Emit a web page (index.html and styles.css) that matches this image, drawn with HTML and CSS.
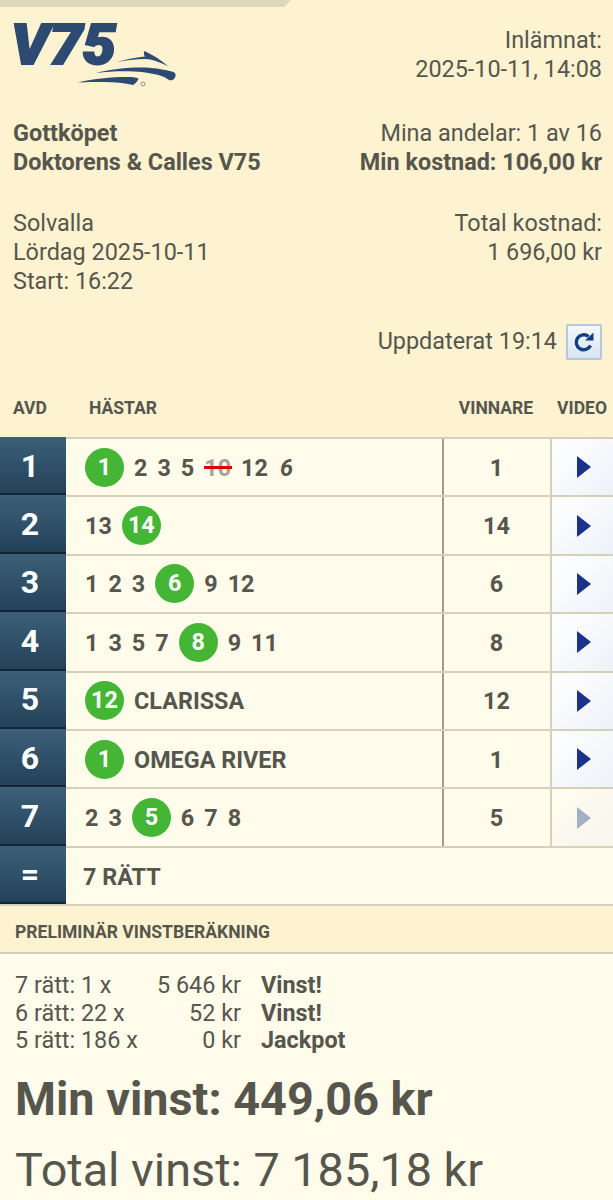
FILE: index.html
```html
<!DOCTYPE html>
<html lang="sv">
<head>
<meta charset="utf-8">
<title>V75</title>
<link rel="stylesheet" href="styles.css">
</head>
<body>
<div class="topbar"></div>
<header class="head">
  <div class="head-row logo-row">
    <svg class="logo" width="180" height="70" viewBox="0 24 180 70">
      <text class="logo-text" x="11" y="64" textLength="105" lengthAdjust="spacingAndGlyphs">V75</text>
      <path class="logo-shape" d="M115 62.500 C125 59.500 135 57.500 145 56.500 C143.500 54.500 143.500 53 144.500 51 C153 55 161 60 168.500 66.500 C161 62.500 153 59.500 146 59 C135 59 125 60.500 115 62.500 Z"/>
      <path class="logo-shape" d="M96 73 C110 69 130 67 146 67.500 C156 68 166 70 172 71.500 C175 72 176 74 175.500 76.500 C174 80 171 81 169 80 C166 78 163 76 160 75.500 C145 71 120 70 96 73 Z"/>
      <path class="logo-shape" d="M78 82.500 C90 79 112 77 128 77 C133 77 138 77.500 138.500 79 C137 82 135 84 133 85 C125 83 115 82 104 82 C95 82 86 82 78 82.500 Z"/>
      <circle class="logo-mark" cx="143" cy="84" r="2"/>
    </svg>
    <div class="right">Inlämnat:<br>2025-10-11, 14:08</div>
  </div>
  <div class="head-row share-row">
    <div class="strong">Gottköpet<br>Doktorens &amp; Calles V75</div>
    <div class="right">Mina andelar: 1 av 16<br><span class="strong">Min kostnad: 106,00 kr</span></div>
  </div>
  <div class="head-row track-row">
    <div>Solvalla<br>Lördag 2025-10-11<br>Start: 16:22</div>
    <div class="right">Total kostnad:<br>1 696,00 kr</div>
  </div>
  <div class="updated">
    <span>Uppdaterat 19:14</span>
    <button class="refresh" type="button" aria-label="Uppdatera">
      <svg width="24" height="24" viewBox="0 0 24 24"><path class="refresh-arc" d="M18.500 15.500 A7.500 7.500 0 1 1 16.500 6.500"/><path class="refresh-tip" d="M13 10.500 L21.500 10.500 L21.500 2.500 Z"/></svg>
    </button>
  </div>
</header>
<div class="cols">
  <div class="col-avd">AVD</div>
  <div class="col-horses">HÄSTAR</div>
  <div class="col-win">VINNARE</div>
  <div class="col-video">VIDEO</div>
</div>
<section class="table">
  <div class="row">
    <div class="avd">1</div>
    <div class="horses"><b class="hit">1</b><span>2</span><span>3</span><span>5</span><span class="out">10</span><span>12</span><i>6</i></div>
    <div class="winner">1</div>
    <div class="video"><span class="play"></span></div>
  </div>
  <div class="row">
    <div class="avd">2</div>
    <div class="horses"><span>13</span><b class="hit">14</b></div>
    <div class="winner">14</div>
    <div class="video"><span class="play"></span></div>
  </div>
  <div class="row">
    <div class="avd">3</div>
    <div class="horses"><span>1</span><span>2</span><span>3</span><b class="hit">6</b><span>9</span><span>12</span></div>
    <div class="winner">6</div>
    <div class="video"><span class="play"></span></div>
  </div>
  <div class="row">
    <div class="avd">4</div>
    <div class="horses"><span>1</span><span>3</span><span>5</span><span>7</span><b class="hit">8</b><span>9</span><span>11</span></div>
    <div class="winner">8</div>
    <div class="video"><span class="play"></span></div>
  </div>
  <div class="row">
    <div class="avd">5</div>
    <div class="horses"><b class="hit">12</b><span>CLARISSA</span></div>
    <div class="winner">12</div>
    <div class="video"><span class="play"></span></div>
  </div>
  <div class="row">
    <div class="avd">6</div>
    <div class="horses"><b class="hit">1</b><span>OMEGA RIVER</span></div>
    <div class="winner">1</div>
    <div class="video"><span class="play"></span></div>
  </div>
  <div class="row">
    <div class="avd">7</div>
    <div class="horses"><span>2</span><span>3</span><b class="hit">5</b><span>6</span><span>7</span><span>8</span></div>
    <div class="winner">5</div>
    <div class="video video-off"><span class="play"></span></div>
  </div>
  <div class="row row-total">
    <div class="avd">=</div>
    <div class="total-label">7 RÄTT</div>
  </div>
</section>
<div class="prelim">PRELIMINÄR VINSTBERÄKNING</div>
<section class="wins">
  <div class="win-grid">
    <span>7 rätt: 1 x</span><span class="amt">5 646 kr</span><span class="strong res">Vinst!</span>
    <span>6 rätt: 22 x</span><span class="amt">52 kr</span><span class="strong res">Vinst!</span>
    <span>5 rätt: 186 x</span><span class="amt">0 kr</span><span class="strong res">Jackpot</span>
  </div>
  <div class="my-win">Min vinst: 449,06 kr</div>
  <div class="all-win">Total vinst: 7 185,18 kr</div>
</section>
</body>
</html>
```
FILE: styles.css
```css
* { box-sizing: border-box; }
html, body { margin: 0; }
body {
  width: 613px;
  height: 1200px;
  overflow: hidden;
  background: #fdf3d0;
  color: #57564d;
  font-family: Roboto, "Liberation Sans", sans-serif;
  font-size: 23.400px;
  line-height: 29.200px;
}
.topbar {
  width: 291px;
  height: 7px;
  background: #dcd8bd;
  clip-path: polygon(0 0, 100% 0, 97.700% 100%, 0 100%);
}
.head { padding: 0 11px 0 13px; }
.head-row { display: flex; justify-content: space-between; align-items: flex-start; }
.right { text-align: right; }
.strong { font-weight: 700; }
.logo-row { height: 112px; padding-top: 19px; margin-left: -13px; }
.logo { display: block; margin-top: -2px; overflow: visible; }
.logo-text { font: italic 900 56px Roboto, sans-serif; fill: #2d4a72; stroke: #2d4a72; stroke-width: 2px; }
.logo-shape { fill: #2d4a72; }
.logo-mark { fill: none; stroke: #6d7f92; stroke-width: 0.800; }
.share-row { height: 90px; }
.track-row { height: 115px; }
.updated { display: flex; justify-content: flex-end; align-items: center; gap: 9px; height: 36px; }
.refresh {
  width: 36px;
  height: 36px;
  padding: 0;
  display: flex;
  align-items: center;
  justify-content: center;
  background: linear-gradient(#f6f8fb, #d7e4f2);
  border: 2px solid #b7c8da;
  border-radius: 2px;
}
.refresh-arc { fill: none; stroke: #123f82; stroke-width: 3.400; }
.refresh-tip { fill: #123f82; }
.cols {
  display: grid;
  grid-template-columns: 66px 378px 106px 63px;
  align-items: center;
  height: 56px;
  margin-top: 21px;
  font-size: 17.550px;
  font-weight: 700;
}
.col-avd { padding-left: 13px; }
.col-horses { padding-left: 23px; }
.col-win { text-align: center; padding-right: 2px; }
.col-video { text-align: right; padding-right: 6px; white-space: nowrap; }
.table { border-top: 2px solid #d6d0b8; }
.row {
  display: grid;
  grid-template-columns: 66px 378px 108px 61px;
  height: 58.400px;
  background: #fffcec;
  border-bottom: 2px solid #d6d0b8;
  font-size: 23.400px;
  font-weight: 700;
}
.avd {
  display: flex;
  align-items: center;
  justify-content: center;
  margin: -2px 0;
  padding: 2px 6px 0 0;
  height: calc(100% + 2px);
  background: linear-gradient(#3c6078, #234259);
  border-bottom: 2px solid #102535;
  color: #fff;
  font-size: 32px;
}
.horses {
  display: flex;
  align-items: center;
  gap: 10px;
  padding-left: 19px;
  border-right: 2px solid #9f9c8c;
}
.horses span, .horses i { padding-top: 2px; }
.hit {
  flex: none;
  width: 39px;
  height: 39px;
  border-radius: 50%;
  display: flex;
  align-items: center;
  justify-content: center;
  background: #45b536;
  color: #fff;
  font-weight: 700;
}
.out {
  color: #a5a49c;
  position: relative;
}
.out::after {
  content: "";
  position: absolute;
  left: 0;
  right: -1px;
  top: 14px;
  height: 3px;
  background: #d8000f;
}
.horses i { font-weight: 700; margin-left: 2px; }
.winner {
  display: flex;
  align-items: center;
  justify-content: center;
  padding: 2px 1px 0 0;
  border-right: 2px solid #d6d0b8;
}
.video {
  display: flex;
  align-items: center;
  padding-left: 25px;
  background: linear-gradient(135deg, #ffffff, #eef2f8);
}
.play {
  width: 0;
  height: 0;
  border-style: solid;
  border-width: 11.500px 0 11.500px 14px;
  border-color: transparent transparent transparent #1a3288;
}
.video-off { background: linear-gradient(135deg, #fffcef, #f8f6ee); }
.video-off .play { border-left-color: #a5afc8; }
.row-total { grid-template-columns: 66px 1fr; }
.total-label { display: flex; align-items: center; padding: 3px 0 0 17px; }
.prelim {
  height: 48px;
  display: flex;
  align-items: center;
  padding: 7px 0 0 15px;
  border-bottom: 2px solid #d6d0b8;
  font-size: 17.550px;
  font-weight: 700;
}
.wins { background: #fffcec; padding: 18px 15px 0; height: 248px; }
.win-grid {
  display: grid;
  grid-template-columns: 131px 95px 1fr;
  line-height: 27.500px;
}
.amt { text-align: right; white-space: nowrap; }
.res { padding-left: 20px; }
.my-win { margin-top: 14px; font-size: 46.800px; line-height: 60px; font-weight: 700; }
.all-win { margin-top: 11px; font-size: 46.800px; line-height: 60px; }
```
